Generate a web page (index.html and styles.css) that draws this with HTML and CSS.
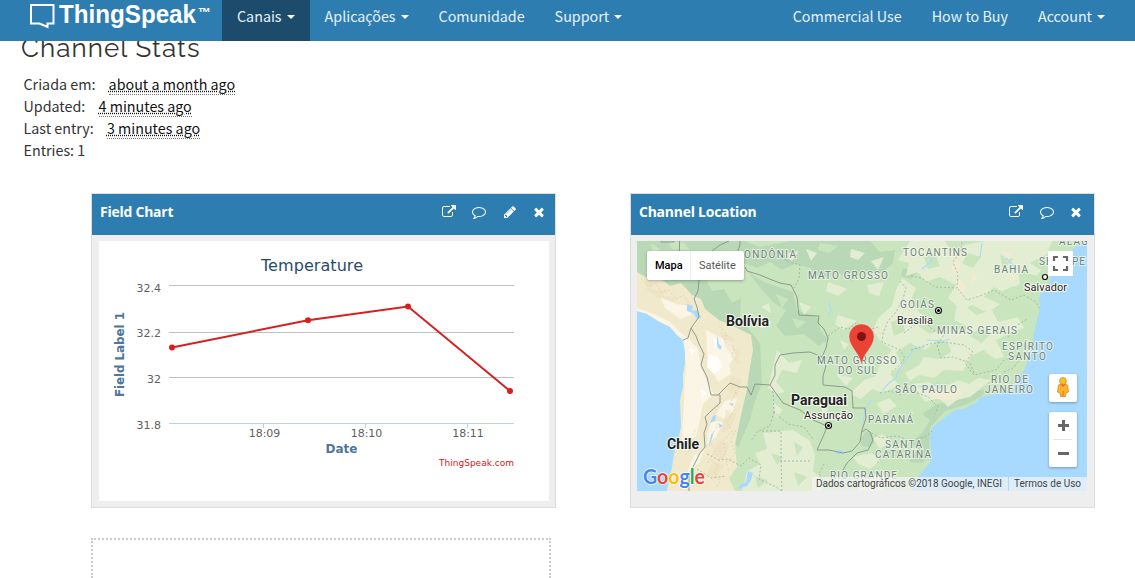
FILE: index.html
```html
<!DOCTYPE html>
<html lang="pt">
<head>
<meta charset="utf-8">
<title>ThingSpeak</title>
<link rel="stylesheet" href="styles.css">
</head>
<body>
<svg class="defs" width="0" height="0">
  <symbol id="external" viewBox="0 0 1792 1792"><path d="M1408 928v320q0 119-84.5 203.5t-203.5 84.5h-832q-119 0-203.5-84.5t-84.5-203.5v-832q0-119 84.5-203.5t203.5-84.5h704q14 0 23 9t9 23v64q0 14-9 23t-23 9h-704q-66 0-113 47t-47 113v832q0 66 47 113t113 47h832q66 0 113-47t47-113v-320q0-14 9-23t23-9h64q14 0 23 9t9 23zm384-864v512q0 26-19 45t-45 19-45-19l-176-176-652 652q-10 10-23 10t-23-10l-114-114q-10-10-10-23t10-23l652-652-176-176q-19-19-19-45t19-45 45-19h512q26 0 45 19t19 45z"/></symbol>
  <symbol id="comment" viewBox="0 0 1792 1792"><path d="M896 384q-204 0-381.5 69.5t-282 187.5-104.5 255q0 112 71.5 213.5t201.5 175.5l87 50-27 96q-24 91-70 172 152-63 275-171l43-38 57 6q69 8 130 8 204 0 381.5-69.5t282-187.5 104.5-255-104.5-255-282-187.5-381.5-69.5zm896 512q0 174-120 321.5t-326 233-450 85.5q-70 0-145-8-198 175-460 242-49 14-114 22h-5q-15 0-27-10.5t-16-27.5v-1q-3-4-.5-12t2-10 4.5-9.5l6-9 7-8.5 8-9q7-8 31-34.5t34.5-38 31-39.5 32.5-51 27-59 26-76q-157-89-247.5-220t-90.5-281q0-174 120-321.5t326-233 450-85.5 450 85.5 326 233 120 321.5z"/></symbol>
  <symbol id="pencil" viewBox="0 0 1792 1792"><path d="M491 1536l91-91-235-235-91 91v107h128v128h107zm523-928q0-22-22-22-10 0-17 7l-542 542q-7 7-7 17 0 22 22 22 10 0 17-7l542-542q7-7 7-17zm-54-192l416 416-832 832h-416v-416zm683 96q0 53-37 90l-166 166-416-416 166-165q36-38 90-38 53 0 91 38l235 234q37 39 37 91z"/></symbol>
  <symbol id="times" viewBox="0 0 1792 1792"><path d="M1490 1322q0 40-28 68l-136 136q-28 28-68 28t-68-28l-294-294-294 294q-28 28-68 28t-68-28l-136-136q-28-28-28-68t28-68l294-294-294-294q-28-28-28-68t28-68l136-136q28-28 68-28t68 28l294 294 294-294q28-28 68-28t68 28l136 136q28 28 28 68t-28 68l-294 294 294 294q28 28 28 68z"/></symbol>
</svg>

<header class="navbar">
  <a class="brand">
    <svg width="190" height="41" viewBox="0 0 190 41">
      <path d="M2 5H24.500V23.500H18.500V27L10.500 23.500H2Z" fill="none" stroke="#fff" stroke-width="2"/>
      <text class="brand-name" x="30" y="23" textLength="137" lengthAdjust="spacingAndGlyphs">ThingSpeak</text>
      <text class="brand-tm" x="169" y="17" textLength="13" lengthAdjust="spacingAndGlyphs">™</text>
    </svg>
  </a>
  <nav class="menu">
    <a class="item active">Canais<i class="caret"></i></a>
    <a class="item">Aplicações<i class="caret"></i></a>
    <a class="item">Comunidade</a>
    <a class="item">Support<i class="caret"></i></a>
  </nav>
  <nav class="menu menu-right">
    <a class="item">Commercial Use</a>
    <a class="item">How to Buy</a>
    <a class="item">Account<i class="caret"></i></a>
  </nav>
</header>

<main>
  <h3 class="title">Channel Stats</h3>
  <div class="stats">
    <div>Criada em: <abbr>about a month ago</abbr></div>
    <div>Updated: <abbr>4 minutes ago</abbr></div>
    <div>Last entry: <abbr>3 minutes ago</abbr></div>
    <div>Entries: 1</div>
  </div>

  <div class="panels">
    <section class="panel">
      <div class="panel-head">
        <span class="panel-title">Field Chart</span>
        <svg class="icon"><use href="#external"/></svg>
        <svg class="icon"><use href="#comment"/></svg>
        <svg class="icon"><use href="#pencil"/></svg>
        <svg class="icon"><use href="#times"/></svg>
      </div>
      <svg class="chart" viewBox="99 241 450 260">
        <path class="grid" d="M169 285.500H514M169 332.500H514M169 377.500H514"/>
        <path class="axis" d="M169 423.500H514M263.500 424V428M365.500 424V428M467.500 424V428"/>
        <path class="series" d="M172 347.500L308 320.300L408 306.500L510 391"/>
        <g class="dots"><circle cx="172" cy="347.500" r="3"/><circle cx="308" cy="320.300" r="3"/><circle cx="408" cy="306.500" r="3"/><circle cx="510" cy="391" r="3"/></g>
        <text class="chart-title" x="261" y="271" textLength="102">Temperature</text>
        <g class="ticks">
          <text x="161" y="292" text-anchor="end">32.4</text>
          <text x="161" y="337" text-anchor="end">32.2</text>
          <text x="161" y="383" text-anchor="end">32</text>
          <text x="161" y="429" text-anchor="end">31.8</text>
          <text x="264.500" y="437" text-anchor="middle">18:09</text>
          <text x="366.500" y="437" text-anchor="middle">18:10</text>
          <text x="468" y="437" text-anchor="middle">18:11</text>
        </g>
        <text class="axis-title" x="341.500" y="453" text-anchor="middle">Date</text>
        <text class="axis-title" transform="translate(124 397) rotate(-90)" textLength="85">Field Label 1</text>
        <text class="credit" x="439" y="466" textLength="75">ThingSpeak.com</text>
      </svg>
    </section>

    <section class="panel panel-map">
      <div class="panel-head">
        <span class="panel-title">Channel Location</span>
        <svg class="icon"><use href="#external"/></svg>
        <svg class="icon"><use href="#comment"/></svg>
        <svg class="icon"><use href="#times"/></svg>
      </div>
      <div class="map">
        <svg class="map-canvas" viewBox="637 241 450 250">
          <rect x="637" y="241" width="450" height="250" fill="#c9e5be"/>
          <!-- dense vegetation -->
          <g fill="#b9d9b6">
            <path d="M637 241H745L760 247L790 241H870L880 252L895 250L893 263L880 275L862 270L852 281L838 273L820 278L810 268L795 264L782 270L770 262L757 268L741 262L728 258L716 270L707 282L712 291L724 289L732 303L741 298L740 318L752 333L760 343L762 384L755 401L750 420L745 431L738 448L733 440L739 405L746 350L700 310L670 288L637 272Z"/>
            <path d="M748 272L764 282L782 288L793 292L797 310L819 318L820 330L828 340L819 346L804 334L785 336L776 326L786 310L774 303L762 290Z"/>
            <path d="M930 428L945 411L965 405L980 397L991 388L973 392L961 398L937 404L922 414L930 420L923 432L911 443L918 449L909 462L923 463L929 453Z"/>
            <path d="M866 431L872 434L875 442L870 447L862 446L860 440ZM940 244L953 250L950 256L938 252ZM903 268L917 272L910 279L901 276Z"/>
          </g>
          <!-- light grassland -->
          <g fill="#e2edd1">
            <path d="M910 241H945L951 251L965 245L985 241H1052L1047 254L1030 263L1041 270L1037 276L1018 270L1020 283L1007 294L994 287L984 297L1000 304L988 313L972 305L962 311L948 298L956 285L940 277L926 282L918 272L906 276L909 263L898 260Z"/>
            <path d="M902 278L916 288L910 302L925 318L917 325L930 334L950 326L967 332L956 345L938 340L925 350L910 343L896 352L902 366L890 374L899 385L883 393L872 389L861 399L850 394L864 380L876 376L881 361L892 350L880 341L873 330L878 318L892 306L896 290Z"/>
            <path d="M958 300L976 315L992 310L998 322L1018 317L1026 331L1023 344L1012 355L995 359L983 350L971 356L963 371L944 370L934 378L919 375L910 381L905 373L919 365L924 357L940 359L951 352L948 343L961 338L968 327L954 320Z"/>
            <path d="M912 384L929 382L940 389L958 380L969 384L978 378L991 380L970 397L957 400L948 407L939 398L925 402Z"/>
            <path d="M763 433L793 430L810 441L815 455L813 471L826 482L821 491H742L747 471L760 464L755 453L767 449Z"/>
            <path d="M777 350L789 363L802 360L797 373L782 370L776 382L785 392L776 394L768 388ZM762 315L772 323L761 329ZM744 345L751 352L750 363L742 356ZM799 302L811 307L804 315ZM761 307L769 303L771 313Z"/>
            <path d="M828 282L847 289L838 296L826 291ZM838 315L857 321L843 330L835 324ZM840 340L849 344L844 350ZM783 254L799 251L792 261ZM806 249L817 253L811 261ZM851 249L865 253L858 260L850 257ZM871 261L884 257L878 270ZM867 285L884 282L879 296L869 293Z"/>
            <path d="M836 374L853 378L846 386ZM877 403L889 398L897 406L883 414ZM853 457L871 453L882 459L870 469L858 464ZM773 402L783 410L776 418ZM832 395L845 399L838 405ZM873 439L882 434L892 441L880 449ZM821 407L829 409L823 414ZM862 478L880 472L894 482L882 491H858Z"/>
          </g>
          <g fill="#c9e5be">
            <path d="M924 257L935 254L940 266L928 269ZM968 253L981 257L973 268L962 263ZM1000 255L1014 259L1003 269ZM931 291L944 287L949 297L936 304ZM996 294L1014 286L1033 290L1039 309L1027 319L1013 307L1001 306ZM980 327L992 333L981 343L970 336ZM913 352L922 356L912 367ZM891 322L902 318L905 331L894 336ZM937 309L949 315L941 324L932 320Z"/>
            <path d="M996 340L1014 331L1033 326L1028 350L1018 374L1006 380L997 371L1006 361ZM979 360L990 364L983 373L973 371ZM771 453L783 457L777 465ZM794 442L803 447L797 456ZM755 476L768 480L758 488ZM794 472L807 477L798 486Z"/>
            <path d="M723 278L735 286L727 291ZM732 251L742 257L735 264ZM668 241L684 243L690 250L672 249ZM776 294L788 299L782 308ZM792 318L806 322L797 329ZM651 243L660 249L653 254ZM820 243L838 246L829 253L818 250Z"/>
          </g>
          <!-- highlands of the interior -->
          <g fill="#f0ebd1">
            <path d="M955 255L961 266L958 278L967 286L962 296L955 288L959 279L951 269ZM1002 250L1013 254L1007 262ZM930 390L948 393L959 387L963 395L944 401L932 397ZM1010 272L1018 278L1009 283ZM973 270L978 279L971 284Z"/>
          </g>
          <!-- andes -->
          <path fill="#f1e9cc" d="M637 272L649 280L660 278L670 286L681 283L692 295L701 299L705 309L719 320L735 327L751 335L753 350L749 373L747 389L740 420L735 445L737 467L729 478L735 491H637Z"/>
          <path fill="#faf5e4" d="M637 308L656 315L670 322L680 332L690 340L698 349L701 368L708 383L714 394L703 404L700 420L696 437L682 441L684 400L686 362L675 333L637 315ZM706 330L718 336L730 342L736 355L729 365L731 374L718 382L712 370L707 352ZM725 401L737 398L733 412L724 419L716 414ZM712 419L723 423L716 437L707 444L708 431ZM694 455L705 449L699 463L687 473ZM660 296L676 304L690 306L691 315L680 319L665 308Z"/>
          <path fill="#fffefa" d="M708 354L718 357L723 367L714 374L707 367ZM713 337L721 343L715 348ZM700 389L707 393L702 398ZM689 348L695 350L692 356Z"/>
          <path fill="#e8d9b5" opacity=".35" d="M644 281L655 284L651 289L667 291L662 296L679 298L673 302L659 298L648 291ZM720 331L737 340L728 343L740 353L737 362L726 348ZM731 377L742 380L737 397L728 391ZM726 409L736 414L731 428L722 433ZM718 440L729 444L724 460L713 455ZM713 461L724 465L716 479L707 474Z"/>
          <path fill="none" stroke="#dccda9" stroke-width=".7" stroke-dasharray="2 2" d="M641 279l8 7 7-3 5 9 8-2 7 9 7-4 6 8M719 326l8 8-3 7 10 6-2 10 8 7M736 392l-5 9 4 8-8 13 5 9-9 10 3 12-8 9M720 402l-7 13 5 10-9 15 6 10-8 14M736 430l-5 10 4 14-9 8 3 10M711 460l7 6-4 7 6 8-5 8M695 430l-5 10 3 8-9 7"/>
          <!-- ocean and lakes -->
          <g fill="#a8daff">
            <path d="M637 311L647 314L658 321L670 327L677 335L683 340L685 352L685 363L683 375L683 387L680 400L681 427L678 440L674 454L672 467L667 491H637Z"/>
            <path d="M1087 241V491H912L918 477L923 471L930 462L931 450L930 437L932 428L941 420L955 410L966 408L975 403L981 397L992 395L1012 390L1015 381L1024 371L1028 360L1032 345L1035 328L1040 308L1039 298L1043 289L1049 282L1051 275L1064 264L1070 251L1080 244L1082 241Z"/>
            <path d="M687 304L693 306L692 311L697 310L701 317L697 319L693 313L687 311ZM717 334L719 344L722 347L720 350L717 346ZM713 416L716 415L715 421L710 423ZM711 435L714 431L711 442L709 447ZM748 471L753 473L751 480L747 486L738 489L740 485L746 482ZM719 423L723 426L719 428ZM729 403L734 404L732 406ZM837 451L844 450L841 454L836 454Z"/>
          </g>
          <path class="rivers" d="M882 391l6-7 8-6 3-9 8-10 6-9 12-3M863 423l2-14 7-9M829 302l2 8-3 5M918 386l12 2 9-5M922 269l9-7 2-7M1006 258l8 8 1 8M982 243l-2 15M927 340l16 1 7-2"/>
          <!-- state lines -->
          <path class="states" d="M783 251l3 10 14 4-1 14-5 9M900 281l6 7-3 11-7 13-8 9-5 12-1 9 18 8 5 8-7 9-8 6M828 336l12-9 9 2 7-6 13 7 9-3M911 276l10 2 14 9 22 1 1-14-5-12 8-12 1-9M958 289l9 11 13-4 14-6 17 10 13-5 12 7 4 7M904 333l12-9 9-2 8 8 11 5-7 10 4 13 12-1 17 6 4 10M911 350l18-6 15-2 20 3 9 7-8 11 9 12 22-5 8-10 17-6M880 393l10-2 11 4 9-5 18 7 10 10-3 7M868 431l13 7 16-2 14 5 14-4 7-6M877 463l8-10 20-2 13 5M773 391l1 21 14 12 16 3 9 12M762 431h19v30h30M774 412l-4 14-12 5-7 10M707 454l12 6 9-1 13 7 8-8 12 7-2 14 17 8 7 5M781 461l1 30M824 464l-5 10 6 9M697 469l14 9 15-2M1008 337l8-11 11-7M1004 372l9-4 5-6"/>
          <!-- national borders -->
          <path class="borders" d="M661 241v1h13v-1M679.500 241V262M712 251L720 245L729 241M737 253L740 245V241M745 267L747 271L760 275L772 280L780 283L791 285L797 297L798 307L799 315L819 316L818 323L824 329L828 338L826 348L822 357L826 366L823 376L823 385L845 387L852 391L853 408L865 408L866 418L862 430L860 442L852 451L843 453L829 450L817 450L822 439L825 432L827 426L813 420L800 410L783 403L770 385L775 375L775 365L780 355L793 353L810 352L822 357M862 432L866 429L870 432L873 440L868 450L857 453L847 463L843 470M699 280L698 291L694 299L697 307L699 317L691 328L688 338L683 340M691 328L696 336L699 344L704 354L701 365L707 377L711 395L720 395L720 403L711 411L705 417L707 424L704 433L705 447L700 453L693 467L689 476L689 491M718 395L730 383L740 387L747 387L751 395L755 384L770 385"/>
          <g class="state-label">
            <text x="744" y="258" textLength="52">ONDÔNIA</text>
            <text x="808" y="279" textLength="80">MATO GROSSO</text>
            <text x="903" y="256" textLength="64">TOCANTINS</text>
            <text x="1059" y="245" textLength="29">ALAG</text>
            <text x="994" y="273" textLength="34">BAHIA</text>
            <text x="1039" y="265" textLength="46">SERGIPE</text>
            <text x="900" y="308" textLength="34">GOIÁS</text>
            <text x="937" y="334" textLength="80">MINAS GERAIS</text>
            <text x="1002" y="350" textLength="51">ESPÍRITO</text>
            <text x="1008" y="360" textLength="38">SANTO</text>
            <text x="817" y="364" textLength="80">MATO GROSSO</text>
            <text x="838" y="374" textLength="39">DO SUL</text>
            <text x="895" y="393" textLength="62">SÃO PAULO</text>
            <text x="991" y="383" textLength="37">RIO DE</text>
            <text x="985" y="393" textLength="48">JANEIRO</text>
            <text x="868" y="423" textLength="45">PARANÁ</text>
            <text x="885" y="448" textLength="37">SANTA</text>
            <text x="875" y="458" textLength="56">CATARINA</text>
            <text x="830" y="479" textLength="67">RIO GRANDE</text>
          </g>
          <g class="country">
            <text x="726" y="326" textLength="43" lengthAdjust="spacingAndGlyphs">Bolívia</text>
            <text x="791" y="405" textLength="56" lengthAdjust="spacingAndGlyphs">Paraguai</text>
            <text x="667" y="449" textLength="32" lengthAdjust="spacingAndGlyphs">Chile</text>
          </g>
          <g class="city">
            <text x="897" y="324" textLength="36">Brasília</text>
            <text x="1024" y="291" textLength="43">Salvador</text>
            <text x="804" y="419" textLength="49">Assunção</text>
          </g>
          <g fill="#fff" stroke="#111" stroke-width="1.200">
            <circle cx="938.500" cy="310.500" r="3"/><circle cx="828.500" cy="425.500" r="3"/><circle cx="1045" cy="277" r="2.500"/>
          </g>
          <circle cx="938.500" cy="310.500" r="1.500"/><circle cx="828.500" cy="425.500" r="1.500"/>
          <path d="M861.500 365C860 353 849 347 849 336.500A12.500 12.500 0 0 1 874 336.500C874 347 863 353 861.500 365Z" fill="#ea4335" stroke="#fff" stroke-width=".3"/>
          <circle cx="861.500" cy="336.500" r="4.500" fill="#811411"/>
          <text class="google" x="643" y="484" textLength="62" lengthAdjust="spacingAndGlyphs"><tspan fill="#4285f4">G</tspan><tspan fill="#ea4335">o</tspan><tspan fill="#fbbc05">o</tspan><tspan fill="#4285f4">g</tspan><tspan fill="#34a853">l</tspan><tspan fill="#ea4335">e</tspan></text>
          <path d="M812 477H1087V491H812Z" fill="#f5f5f5" fill-opacity=".7"/>
          <path d="M1008.500 477V491" stroke="#a8daff"/>
          <g class="legal">
            <text x="816" y="487" textLength="186" lengthAdjust="spacingAndGlyphs">Dados cartográficos ©2018 Google, INEGI</text>
            <text x="1014" y="487" textLength="67" lengthAdjust="spacingAndGlyphs">Termos de Uso</text>
          </g>
        </svg>
        <div class="map-type"><span class="type-on">Mapa</span><span class="type-off">Satélite</span></div>
        <svg class="fullscreen" viewBox="0 0 25 25"><path d="M6 10V6H10M15 6H19V10M19 15V19H15M10 19H6V15" fill="none" stroke="#666" stroke-width="2.200"/></svg>
        <svg class="pegman" viewBox="0 0 28 28"><path d="M9.500 11Q14 9 18.500 11L19.500 18L17 19L16.500 22.500H11.500L11 19L8.500 18Z" fill="#fbb32c" stroke="#d98b19" stroke-width=".8"/><path d="M11 10L14 13L17 10" fill="#e06a2b"/><circle cx="14" cy="7" r="3.400" fill="#fbbf2d" stroke="#d98b19" stroke-width=".8"/><path d="M14 17V22" stroke="#c9791c"/></svg>
        <svg class="zoom" viewBox="0 0 28 55"><path d="M9 13.500H20M14.500 8V19M9 41.500H20" stroke="#666" stroke-width="3"/><path d="M4 27.500H23" stroke="#e6e6e6"/></svg>
      </div>
    </section>
  </div>
  <div class="dropzone"></div>
</main>
</body>
</html>
```

FILE: styles.css
```css
html, body { margin: 0; height: 578px; overflow: hidden; background: #fff; }
body { font-family: "Noto Sans CJK SC", "Noto Sans", sans-serif; font-size: 14.3px; color: #333; }
.defs { display: none; }
.navbar { position: relative; z-index: 2; display: flex; height: 41px; background: #2e7db1; }
.brand { width: 222px; height: 41px; }
.brand svg { display: block; margin-left: 29px; }
.brand-name { font: bold 25px "Liberation Sans", sans-serif; fill: #fff; }
.brand-tm { font: bold 13px "Liberation Sans", sans-serif; fill: #fff; }
.menu { display: flex; }
.menu-right { margin-left: auto; margin-right: 15px; }
.item { display: flex; align-items: center; height: 31px; padding: 0 15px 10px; color: #e8f3fa; white-space: nowrap; line-height: 31px; font-size: 14.3px; }
.active { background: #1c4b6b; }
.caret { margin: 3px 0 0 5px; border: 4px solid transparent; border-top-color: #fff; border-bottom: 0; }
.title { margin: -11px 0 0 21px; height: 37px; font: 400 26px/36px Raleway, Lato, sans-serif; letter-spacing: 1.1px; white-space: nowrap; }
.stats { margin: 6px 0 0 23.5px; line-height: 22px; white-space: nowrap; }
.stats div { height: 22px; }
abbr { display: inline-block; height: 21px; margin-left: 10px; color: #111; line-height: 22px; vertical-align: top; text-decoration: underline dotted; border-bottom: 1px dotted #777; }
.panels { display: flex; gap: 74px; margin: 32px 0 0 91px; }
.panel { box-sizing: border-box; width: 465px; height: 315px; border: 1px solid #ddd; background: #eee; }
.panel-head { display: flex; align-items: center; gap: 16.3px; box-sizing: border-box; height: 41px; padding: 0 9.5px 5px 8px; background: #2e7db1; }
.panel-map .panel-head { padding-right: 11.5px; }
.panel-title { margin-right: auto; font: bold 13.9px/20px "Trebuchet MS", "Open Sans", sans-serif; letter-spacing: -.2px; color: #fff; }
.icon { width: 14px; height: 14px; fill: #fff; }
.icon:last-child { margin-left: -1.5px; }
.chart { display: block; width: 450px; height: 260px; margin: 6px 0 0 7px; background: #fff; font-family: "DejaVu Sans", sans-serif; }
.grid { fill: none; stroke: #c0c0c0; }
.axis { fill: none; stroke: #c0d0e0; }
.series { fill: none; stroke: #d62020; stroke-width: 2; }
.dots { fill: #d62020; }
.chart-title { font-size: 16px; fill: #274b6d; }
.ticks { font-size: 11px; fill: #606060; }
.axis-title { font-size: 12px; font-weight: bold; fill: #4d759e; }
.credit { font-size: 9px; fill: #d62020; }
.map { position: relative; width: 450px; height: 250px; margin: 6px 0 0 6px; font-family: Roboto, sans-serif; }
.map-canvas { display: block; width: 450px; height: 250px; }
.rivers { fill: none; stroke: #a8daff; stroke-width: 1.1; }
.states { fill: none; stroke: #96a596; stroke-width: .7; stroke-dasharray: 2 2; }
.borders { fill: none; stroke: #87918a; stroke-width: .9; stroke-linejoin: round; }
.state-label { font-size: 10px; fill: #6d7f7b; stroke: rgba(242,248,236,.75); stroke-width: 2px; paint-order: stroke; }
.country { font-size: 14px; font-weight: bold; fill: #222; stroke: #f7faf2; stroke-width: 2px; paint-order: stroke; }
.city { font-size: 11px; fill: #222; stroke: #f7faf2; stroke-width: 2px; paint-order: stroke; }
.google { font: bold 20px Lato, sans-serif; stroke: #fff; stroke-width: 1.5px; paint-order: stroke; }
.legal { font-size: 10px; fill: #444; }
.map-type { position: absolute; left: 10px; top: 10px; display: flex; width: 97px; height: 29px; background: #fff; border-radius: 2px; box-shadow: 0 1px 3px rgba(0,0,0,.3); font-size: 11px; line-height: 29px; }
.type-on { box-sizing: border-box; width: 44px; padding-left: 8px; font-weight: 500; color: #000; border-right: 1px solid #eee; }
.type-off { padding-left: 8px; color: #565656; }
.fullscreen { position: absolute; left: 411px; top: 10px; width: 25px; height: 25px; background: #fff; }
.pegman, .zoom { position: absolute; left: 412px; width: 28px; background: #fff; border-radius: 2px; box-shadow: 0 1px 3px rgba(0,0,0,.3); }
.pegman { top: 133px; height: 28px; }
.zoom { top: 171px; height: 55px; }
.dropzone { width: 456px; height: 38px; margin: 30px 0 0 91px; border: 2px dotted #ccc; border-bottom: 0; }
```
